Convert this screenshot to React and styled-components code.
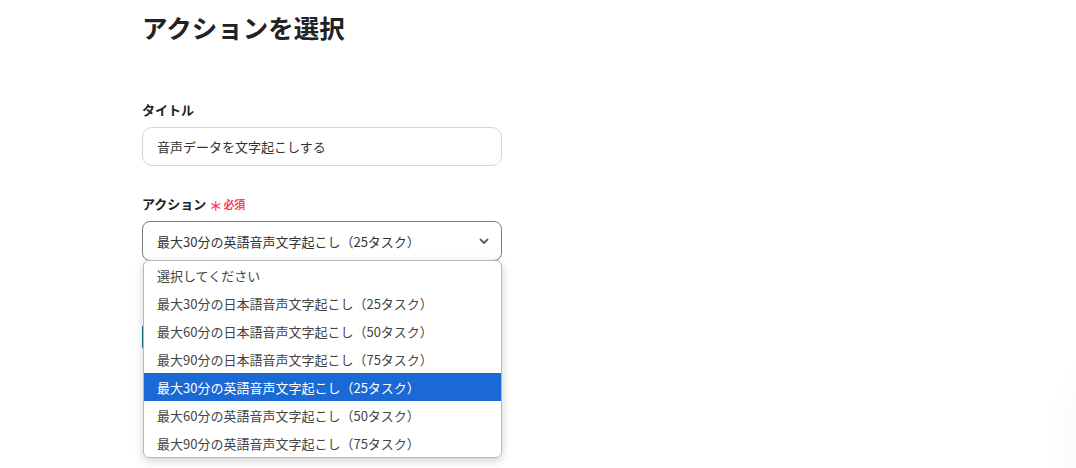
import React from "react";
import styled, { createGlobalStyle } from "styled-components";

const Global = createGlobalStyle`
  html, body { margin: 0; padding: 0; background: #fff; }
  body { font-family: "Noto Sans CJK JP", "Noto Sans", sans-serif; color: #222; overflow: hidden; }
  * { box-sizing: border-box; }
`;

const Page = styled.div`
  width: 1076px;
  height: 468px;
  padding: 9px 0 0 142px;
  position: relative;
  overflow: hidden;
`;

const Heading = styled.h1`
  margin: 0;
  font-size: 25.5px;
  line-height: 36px;
  font-weight: 700;
  color: #222;
`;

const Form = styled.div`
  width: 360px;
  margin-top: 56px;
  display: flex;
  flex-direction: column;
`;

const Field = styled.div`
  display: flex;
  flex-direction: column;
  gap: 8px;
  margin-bottom: ${(p) => p.$mb || 0}px;
`;

const Label = styled.div`
  font-size: 13px;
  line-height: 18px;
  font-weight: 700;
  color: #222;
  display: flex;
  align-items: center;
  gap: 3px;
`;

const Required = styled.span`
  color: #ff3d62;
  font-size: 11px;
  font-weight: 700;
  display: inline-flex;
  align-items: center;
  gap: 1px;
`;

const Asterisk = styled.span`
  font-size: 13px;
  line-height: 1;
  margin-top: 2px;
`;

const Input = styled.div`
  height: 39px;
  border: 1px solid #d6d6d6;
  border-radius: 10px;
  padding: 0 14px;
  display: flex;
  align-items: center;
  font-size: 13px;
  color: #333;
`;

const SelectWrap = styled.div`
  position: relative;
`;

const Select = styled.div`
  height: 40px;
  border: 1px solid #7a7a7a;
  border-radius: 8px;
  padding: 0 14px;
  display: flex;
  align-items: center;
  justify-content: space-between;
  font-size: 13px;
  color: #333;
`;

const Chevron = styled.svg`
  width: 12px;
  height: 12px;
  margin-right: -3px;
`;

const Menu = styled.ul`
  position: absolute;
  top: calc(100% - 1px);
  left: 1px;
  right: 0;
  margin: 0;
  padding: 0;
  list-style: none;
  background: #fff;
  border: 1px solid #b8b8b8;
  border-radius: 6px;
  box-shadow: 0 3px 10px rgba(0, 0, 0, 0.18);
  overflow: hidden;
  z-index: 2;
`;

const Item = styled.li`
  height: 28px;
  padding: 0 13px;
  display: flex;
  align-items: center;
  font-size: 13px;
  color: ${(p) => (p.$active ? "#fff" : "#444")};
  background: ${(p) => (p.$active ? "#1b69d5" : "transparent")};
`;

const NextButton = styled.div`
  margin-top: 63px;
  width: 120px;
  height: 26px;
  border-radius: 4px;
  background: #1d6f7e;
`;

const FloatShadow = styled.div`
  position: fixed;
  right: -90px;
  bottom: -30px;
  width: 80px;
  height: 120px;
  border-radius: 40px;
  background: #fff;
  box-shadow: 0 0 50px rgba(0, 0, 0, 0.07);
`;

const options = [
  "選択してください",
  "最大30分の日本語音声文字起こし（25タスク）",
  "最大60分の日本語音声文字起こし（50タスク）",
  "最大90分の日本語音声文字起こし（75タスク）",
  "最大30分の英語音声文字起こし（25タスク）",
  "最大60分の英語音声文字起こし（50タスク）",
  "最大90分の英語音声文字起こし（75タスク）",
];

export default function App() {
  return (
    <>
      <Global />
      <Page>
        <Heading>アクションを選択</Heading>
        <Form>
          <Field $mb={29}>
            <Label>タイトル</Label>
            <Input>音声データを文字起こしする</Input>
          </Field>
          <Field>
            <Label>
              アクション
              <Required>
                <Asterisk>＊</Asterisk>必須
              </Required>
            </Label>
            <SelectWrap>
              <Select>
                最大30分の英語音声文字起こし（25タスク）
                <Chevron viewBox="0 0 12 12" fill="none">
                  <path d="M2.5 4.5 L6 8 L9.5 4.5" stroke="#5f5f5f" strokeWidth="1.8" strokeLinecap="round" strokeLinejoin="round" />
                </Chevron>
              </Select>
              <Menu>
                {options.map((o, i) => (
                  <Item key={i} $active={i === 4}>{o}</Item>
                ))}
              </Menu>
            </SelectWrap>
          </Field>
          <NextButton />
        </Form>
        <FloatShadow />
      </Page>
    </>
  );
}
